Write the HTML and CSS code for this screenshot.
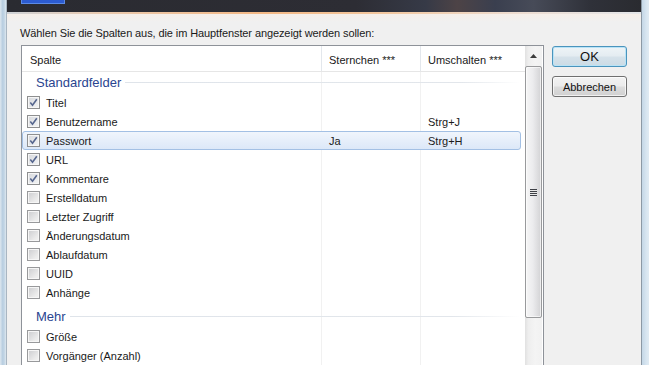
FILE: index.html
```html
<!DOCTYPE html>
<html lang="de">
<head>
<meta charset="utf-8">
<title>Spalten</title>
<link rel="stylesheet" href="styles.css">
</head>
<body>
<div class="window">
  <div class="frame-l"></div>
  <div class="center">
    <div class="titlebar"><span class="tb-icon"></span></div>
    <div class="glow"></div>
    <div class="client">
      <div class="label">Wählen Sie die Spalten aus, die im Hauptfenster angezeigt werden sollen:</div>
      <div class="main">
        <div class="listbox">
          <div class="lv">
            <div class="hdr">
              <div class="hc c1">Spalte</div>
              <div class="hc c2">Sternchen ***</div>
              <div class="hc c3">Umschalten ***</div>
            </div>
            <div class="rows">
              <div class="grp first"><span>Standardfelder</span></div>
              <div class="row"><div class="c1"><span class="cb"><svg viewBox="0 0 11 11"><path d="M2.3 5.6l2.2 2.6 4.3-6"/></svg></span>Titel</div><div class="c2"></div><div class="c3"></div></div>
              <div class="row"><div class="c1"><span class="cb"><svg viewBox="0 0 11 11"><path d="M2.3 5.6l2.2 2.6 4.3-6"/></svg></span>Benutzername</div><div class="c2"></div><div class="c3">Strg+J</div></div>
              <div class="row sel"><div class="c1"><span class="cb"><svg viewBox="0 0 11 11"><path d="M2.3 5.6l2.2 2.6 4.3-6"/></svg></span>Passwort</div><div class="c2">Ja</div><div class="c3">Strg+H</div></div>
              <div class="row"><div class="c1"><span class="cb"><svg viewBox="0 0 11 11"><path d="M2.3 5.6l2.2 2.6 4.3-6"/></svg></span>URL</div><div class="c2"></div><div class="c3"></div></div>
              <div class="row"><div class="c1"><span class="cb"><svg viewBox="0 0 11 11"><path d="M2.3 5.6l2.2 2.6 4.3-6"/></svg></span>Kommentare</div><div class="c2"></div><div class="c3"></div></div>
              <div class="row"><div class="c1"><span class="cb off"></span>Erstelldatum</div><div class="c2"></div><div class="c3"></div></div>
              <div class="row"><div class="c1"><span class="cb off"></span>Letzter Zugriff</div><div class="c2"></div><div class="c3"></div></div>
              <div class="row"><div class="c1"><span class="cb off"></span>Änderungsdatum</div><div class="c2"></div><div class="c3"></div></div>
              <div class="row"><div class="c1"><span class="cb off"></span>Ablaufdatum</div><div class="c2"></div><div class="c3"></div></div>
              <div class="row"><div class="c1"><span class="cb off"></span>UUID</div><div class="c2"></div><div class="c3"></div></div>
              <div class="row"><div class="c1"><span class="cb off"></span>Anhänge</div><div class="c2"></div><div class="c3"></div></div>
              <div class="grp"><span>Mehr</span></div>
              <div class="row"><div class="c1"><span class="cb off"></span>Größe</div><div class="c2"></div><div class="c3"></div></div>
              <div class="row"><div class="c1"><span class="cb off"></span>Vorgänger (Anzahl)</div><div class="c2"></div><div class="c3"></div></div>
            </div>
          </div>
          <div class="sb">
            <div class="sb-up"><svg viewBox="0 0 7 4"><path d="M0 4L3.5 0 7 4z"/></svg></div>
            <div class="thumb"><span class="grip"></span></div>
            <div class="track"></div>
          </div>
        </div>
        <div class="btns">
          <button class="btn def">OK</button>
          <button class="btn">Abbrechen</button>
        </div>
      </div>
    </div>
  </div>
  <div class="frame-r"></div>
</div>
</body>
</html>
```

FILE: styles.css
```css
* { box-sizing: border-box; }
html, body { margin: 0; padding: 0; }
body {
  width: 649px;
  height: 365px;
  overflow: hidden;
  font-family: "Liberation Sans", Arial, sans-serif;
  font-size: 11px;
  color: #1a1a1a;
  background: #d3e1ec;
}
.window { display: flex; height: 365px; overflow: hidden; }
.frame-l {
  width: 6px;
  flex: none;
  background: linear-gradient(to right, #dde7ef, #b7cde0 45%, #c9dae8 80%, #dfe8ef);
}
.frame-r {
  width: 7px;
  flex: none;
  background: linear-gradient(to right, #c4d7e6, #d7e5f0 60%, #e0ebf3);
}
.center {
  flex: 1;
  min-width: 0;
  display: flex;
  flex-direction: column;
  border-left: 1px solid #a9b6c2;
  border-right: 1px solid #8c99a5;
}
.titlebar {
  height: 12px;
  flex: none;
  background: linear-gradient(to right, #2a2b31 0%, #2d2d34 55%, #363a47 66%, #4d4346 71%, #3a3f4f 77%, #474b58 83%, #2f3139 92%, #2a2b30 100%);
}
.tb-icon {
  display: block;
  width: 44px;
  height: 4px;
  margin-left: 14px;
  background: #2c5bd0;
  border: 1px solid #5b8ae6;
  border-top: none;
}
.glow {
  height: 2px;
  flex: none;
  background: linear-gradient(to right, #cfd3d8 0%, #e9c9ae 15%, #f4b884 40%, #f2c79f 60%, #eddcd0 80%, #e4e6e9 100%);
}
.client {
  flex: 1;
  min-height: 0;
  background: linear-gradient(#f6efe9 0px, #f0f0f0 8px);
  padding: 12px 0 0 13px;
  display: flex;
  flex-direction: column;
}
.label { line-height: 14px; height: 14px; color: #1a1a1a; letter-spacing: -0.1px; white-space: nowrap; }
.main { display: flex; margin-top: 5px; }
.listbox {
  margin-left: 1px;
  width: 523px;
  height: 340px;
  border: 1px solid #8e9299;
  background: #fff;
  display: flex;
}
.lv { width: 503px; display: flex; flex-direction: column; }
.hdr {
  display: flex;
  height: 26px;
  border-bottom: 1px solid #e6e6e6;
  flex: none;
}
.hc { line-height: 22px; padding-top: 3px; color: #202020; white-space: nowrap; }
.hdr .c1 { width: 300px; padding-left: 8px; border-right: 1px solid #e3e7ec; }
.hdr .c2 { width: 99px; padding-left: 7px; border-right: 1px solid #e3e7ec; }
.hdr .c3 { width: 100px; padding-left: 7px; }
.rows {
  flex: 1;
  background-image: linear-gradient(#f1f1f1, #f1f1f1), linear-gradient(#f1f1f1, #f1f1f1);
  background-size: 1px 100%, 1px 100%;
  background-position: 299px 0, 398px 0;
  background-repeat: no-repeat;
}
.grp {
  height: 21px;
  display: flex;
  align-items: center;
  padding-left: 14px;
  padding-right: 5px;
  margin-top: 4px;
  font-size: 13px;
  color: #2a4590;
}
.grp.first { margin-top: 0; }
.grp::after {
  content: "";
  flex: 1;
  height: 1px;
  margin-left: 4px;
  background: linear-gradient(to right, #dfe4ea, #e2e6eb 85%, rgba(226,230,235,0));
}
.row {
  display: flex;
  align-items: center;
  height: 19px;
  width: 499px;
  border: 1px solid transparent;
  border-radius: 3px;
  white-space: nowrap;
}
.row.sel {
  border-color: #a3c0e4;
  background: linear-gradient(#f0f5fc, #dce8f8);
}
.row .c1 { width: 299px; display: flex; align-items: center; padding-left: 4px; }
.row .c2 { width: 99px; padding-left: 7px; }
.row .c3 { width: 99px; padding-left: 7px; }
.cb {
  width: 13px;
  height: 13px;
  flex: none;
  margin-right: 6px;
  border: 1px solid #8e8f90;
  background: linear-gradient(135deg, #d6d8dc, #f4f5f6);
  box-shadow: inset 0 0 0 1px #f6f6f6;
  display: flex;
  align-items: center;
  justify-content: center;
}
.cb.off {
  background: linear-gradient(135deg, #cbcccf, #ebebeb 70%, #f4f4f4);
  border-color: #98999b;
}
.cb svg { width: 11px; height: 11px; fill: none; stroke: #56668e; stroke-width: 1.6; }
.sb {
  width: 17px;
  flex: none;
  display: flex;
  flex-direction: column;
  background: linear-gradient(to right, #e1e1e1, #eeeeee 20%, #f4f4f4 60%, #f1f1f1);
}
.sb-up {
  height: 19px;
  flex: none;
  display: flex;
  align-items: center;
  justify-content: center;
  padding-top: 1px;
}
.sb-up svg { width: 7px; height: 4px; fill: #3c3c3c; }
.thumb {
  height: 252px;
  flex: none;
  margin-top: 1px;
  border: 1px solid #999a9c;
  border-radius: 2px;
  background: linear-gradient(to right, #f6f6f6, #ececee 45%, #dcdcde 80%, #d2d2d4);
  box-shadow: inset 0 0 0 1px rgba(255,255,255,0.6);
  display: flex;
  align-items: center;
  justify-content: center;
}
.grip {
  width: 7px;
  height: 7px;
  margin-left: -1px;
  background: repeating-linear-gradient(#3e4046 0 1px, #e8e8e8 1px 2px);
}
.track { flex: 1; }
.btns {
  margin-left: 8px;
  margin-top: 1px;
  display: flex;
  flex-direction: column;
  gap: 9px;
}
.btn {
  width: 75px;
  height: 21px;
  padding: 0;
  font-family: "Liberation Sans", Arial, sans-serif;
  font-size: 11px;
  color: #111;
  border: 1px solid #707070;
  border-radius: 3px;
  background: linear-gradient(#f3f3f3 0%, #ebebeb 48%, #dddddd 52%, #d0d0d0 100%);
  box-shadow: inset 0 0 0 1px rgba(255,255,255,0.7);
}
.btn.def {
  font-size: 13px;
  border-color: #4a94bd;
  background: linear-gradient(#eef4f7 0%, #e4ecf1 48%, #d6e2ea 52%, #cbdbe5 100%);
  box-shadow: inset 0 0 0 1px #b9e3f6;
}
```
